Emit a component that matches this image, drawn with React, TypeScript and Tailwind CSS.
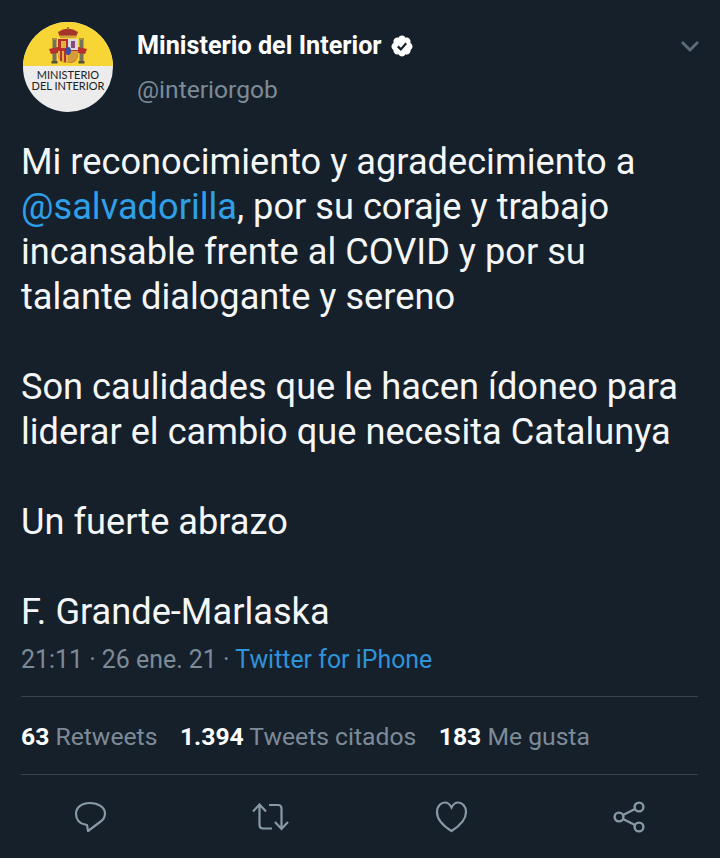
export default function App() {
  return (
    <div className="w-[720px] h-[858px] overflow-hidden bg-[#16202b] pl-[21px] pr-[22px] text-white" style={{ fontFamily: "Roboto, sans-serif" }}>
      <div className="flex pt-[22px] h-[139px]">
        <div className="ml-[2px] relative w-[90px] h-[90px] rounded-full overflow-hidden shrink-0 bg-[#ececec] flex flex-col">
          <div className="h-[44px] bg-[#f6d535] flex justify-center items-start pt-[5px]">
            <svg width="38" height="37" viewBox="0 0 38 37">
              <rect x="3" y="11" width="5" height="2" fill="#a8913a" />
              <rect x="30" y="11" width="5" height="2" fill="#a8913a" />
              <rect x="3.5" y="13" width="4" height="22" fill="#77735a" />
              <rect x="30.5" y="13" width="4" height="22" fill="#77735a" />
              <rect x="2.5" y="34" width="6" height="2.5" fill="#55503a" />
              <rect x="29.5" y="34" width="6" height="2.5" fill="#55503a" />
              <path d="M0 22 L9 20 V26 L2 27 Z" fill="#b5332c" />
              <path d="M38 22 L29 20 V26 L36 27 Z" fill="#b5332c" />
              <path d="M9 5 Q19 -2 29 5 L27 10 H11Z" fill="#a5342a" />
              <rect x="18.3" y="0" width="1.4" height="3" fill="#8a6d22" />
              <rect x="11" y="8.5" width="16" height="2.5" fill="#d0a43a" />
              <path d="M9 12 H29 V27 Q29 36 19 36 Q9 36 9 27Z" fill="#b9312b" />
              <rect x="19" y="12" width="10" height="11" fill="#d9d6dc" />
              <path d="M22 14 H26 V21 H22Z" fill="#8a4a7a" />
              <path d="M19 24 H29 V27 Q29 35 19 36Z" fill="#d79a3a" />
              <path d="M9 24 H19 V36 Q9 36 9 27Z" fill="#e2b23e" />
              <rect x="11" y="24" width="2" height="10" fill="#b9312b" />
              <rect x="15" y="24" width="2" height="11" fill="#b9312b" />
              <rect x="12" y="14" width="5" height="7" fill="#e1b33d" />
              <ellipse cx="19" cy="24" rx="3" ry="4" fill="#3f4fa0" />
            </svg>
          </div>
          <div className="w-[76px] mx-auto pt-[3px] text-center text-[#222] text-[11px] leading-[11px]" style={{ fontFamily: "Lato, sans-serif" }}>
            MINISTERIO DEL INTERIOR
          </div>
        </div>
        <div className="ml-[24px] flex-1 pt-[9px]">
          <div className="flex items-center text-[25.2px] leading-[30px] font-bold">
            <span>Ministerio del Interior</span>
            <svg className="ml-[8px]" width="24" height="24" viewBox="0 0 24 24">
              <path fill="#fff" d="M22.5 12.5c0-1.58-.875-2.95-2.148-3.6.154-.435.238-.905.238-1.4 0-2.21-1.71-3.998-3.818-3.998-.47 0-.92.084-1.336.25C14.818 2.415 13.51 1.5 12 1.5s-2.816.917-3.437 2.25c-.415-.165-.866-.25-1.336-.25-2.11 0-3.818 1.79-3.818 4 0 .494.083.964.237 1.4-1.272.65-2.147 2.018-2.147 3.6 0 1.495.782 2.798 1.942 3.486-.02.17-.032.34-.032.514 0 2.21 1.708 4 3.818 4 .47 0 .92-.086 1.335-.25.62 1.334 1.926 2.25 3.437 2.25 1.512 0 2.818-.916 3.437-2.25.415.163.865.248 1.336.248 2.11 0 3.818-1.79 3.818-4 0-.174-.012-.344-.033-.513 1.158-.687 1.943-1.99 1.943-3.484z" />
              <path fill="none" stroke="#16202b" strokeWidth="2.2" d="M7.8 12.4l3 3 5.4-6.2" />
            </svg>
            <svg className="ml-auto mr-[-1px]" width="18" height="11" viewBox="0 0 18 11" fill="none" stroke="#5d6d7c" strokeWidth="2.8">
              <path d="M1 1L9 9L17 1" />
            </svg>
          </div>
          <div className="mt-[14px] text-[24.6px] leading-[30px] text-[#7d8b98]">@interiorgob</div>
        </div>
      </div>

      <div className="text-[36.2px] leading-[45px] text-[#f4f6f7]">
        <p>Mi reconocimiento y agradecimiento a</p>
        <p><span className="text-[#2f9fe8]">@salvadorilla</span>, por su coraje y trabajo</p>
        <p>incansable frente al COVID y por su</p>
        <p>talante dialogante y sereno</p>
        <p className="h-[45px]"></p>
        <p>Son caulidades que le hacen ídoneo para</p>
        <p>liderar el cambio que necesita Catalunya</p>
        <p className="h-[45px]"></p>
        <p>Un fuerte abrazo</p>
        <p className="h-[45px]"></p>
        <p>F. Grande-Marlaska</p>
      </div>

      <div className="mt-[9px] text-[24.9px] leading-[34px] text-[#7d8b98]">
        21:11 · 26 ene. 21 · <span className="text-[#2f93d9]">Twitter for iPhone</span>
      </div>

      <div className="mt-[19px] border-t border-[#38444d]"></div>
      <div className="h-[77px] pt-[2px] flex items-center gap-[22.5px] text-[24.7px] text-[#7d8b98]">
        <span><b className="text-white font-bold">63</b> Retweets</span>
        <span><b className="text-white font-bold">1.394</b> Tweets citados</span>
        <span><b className="text-white font-bold">183</b> Me gusta</span>
      </div>
      <div className="border-t border-[#38444d]"></div>

      <div className="flex justify-between items-center pl-[53px] pr-[53px] pt-[26px] text-[#8899a6]">
        <svg width="33" height="32" viewBox="0 0 33 32" fill="none" stroke="currentColor" strokeWidth="2.2" strokeLinejoin="round">
          <path d="M16 2 C8 2 2 6 2 13 C2 19 6 23 11 23.5 L13 24 L14 30 L26 21 C29 19 31 16 31 12.5 C31 6 24 2 16 2Z" />
        </svg>
        <svg width="37" height="28" viewBox="0 0 37 28" fill="none" stroke="currentColor" strokeWidth="2.2">
          <path d="M1 8.5 L7.5 1.5 L14 8.5 M7.5 2.5 V22 Q7.5 25.5 11 25.5 H20" />
          <path d="M36 19 L29.5 26 L23 19 M29.5 25 V5.5 Q29.5 2 26 2 H17" />
        </svg>
        <svg width="33" height="32" viewBox="0 0 33 32" fill="none" stroke="currentColor" strokeWidth="2.2">
          <path d="M16.5 30 C10 26 2 19 2 11 C2 5 6 1.5 10 1.5 C13 1.5 15 3.5 16.5 6.5 C18 3.5 20 1.5 23 1.5 C27 1.5 31 5 31 11 C31 19 23 26 16.5 30Z" />
        </svg>
        <svg width="32" height="32" viewBox="0 0 32 32" fill="none" stroke="currentColor" strokeWidth="2.4">
          <circle cx="6" cy="16" r="4.4" />
          <circle cx="26" cy="6" r="4.4" />
          <circle cx="26" cy="26" r="4.4" />
          <path d="M10 14 L22 8 M10 18 L22 24" />
        </svg>
      </div>
    </div>
  );
}
